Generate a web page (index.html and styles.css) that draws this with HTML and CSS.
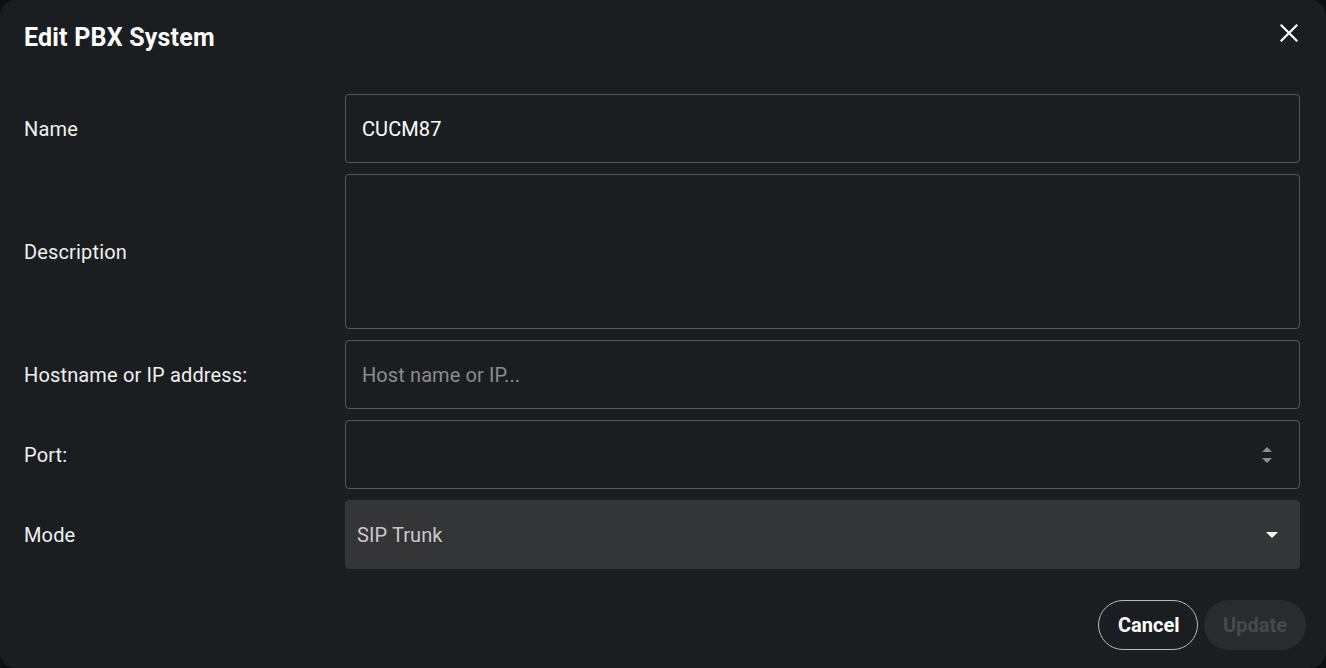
FILE: index.html
```html
<!DOCTYPE html>
<html lang="en">
<head>
<meta charset="utf-8">
<title>Edit PBX System</title>
<link rel="stylesheet" href="styles.css">
</head>
<body>
<div class="dialog">
  <div class="header">
    <h1 class="title">Edit PBX System</h1>
    <button class="close" aria-label="Close">
      <svg width="18" height="18" viewBox="0 0 18 18"><path d="M1.5 1.5 L16.5 16.5 M16.5 1.5 L1.5 16.5" stroke="#fff" stroke-width="2.2" stroke-linecap="square" fill="none"/></svg>
    </button>
  </div>
  <div class="form">
    <label class="label">Name</label>
    <div class="field"><input class="input" type="text" value="CUCM87"></div>

    <label class="label">Description</label>
    <div class="field field-tall"><textarea class="input textarea"></textarea></div>

    <label class="label">Hostname or IP address:</label>
    <div class="field"><input class="input" type="text" placeholder="Host name or IP..."></div>

    <label class="label">Port:</label>
    <div class="field">
      <input class="input" type="text">
      <svg class="spin" width="12" height="20" viewBox="0 0 12 20"><path d="M1 7 L6 2 L11 7 Z M1 13 L6 18 L11 13 Z" fill="#8c8e92"/></svg>
    </div>

    <label class="label">Mode</label>
    <div class="select">
      <span class="select-value">SIP Trunk</span>
      <svg class="caret" width="14" height="8" viewBox="0 0 14 8"><path d="M1 1 L7 7 L13 1 Z" fill="#fff"/></svg>
    </div>
  </div>
  <div class="actions">
    <button class="btn btn-cancel">Cancel</button>
    <button class="btn btn-update" disabled>Update</button>
  </div>
</div>
</body>
</html>
```

FILE: styles.css
```css
* { box-sizing: border-box; }
html, body {
  margin: 0;
  padding: 0;
  background: #0e0f10;
  font-family: Roboto, "Liberation Sans", Arial, sans-serif;
  color: #f2f2f2;
}
.dialog {
  width: 1326px;
  height: 668px;
  background: #1b1e21;
  border-radius: 16px;
  display: flex;
  flex-direction: column;
}
.header {
  height: 74px;
  display: flex;
  align-items: center;
  justify-content: space-between;
  padding: 0 28px 0 24px;
}
.title {
  margin: 0;
  font-size: 25px;
  font-weight: 700;
  color: #fff;
  letter-spacing: 0.2px;
}
.close {
  background: none;
  border: 0;
  padding: 0;
  width: 18px;
  height: 18px;
  align-self: flex-start;
  margin-top: 24px;
  cursor: pointer;
  display: flex;
}
.form {
  padding: 20px 26px 0 24px;
  display: grid;
  grid-template-columns: 321px 1fr;
  grid-template-rows: 69px 155px 69px 69px 69px;
  row-gap: 11px;
  align-items: center;
}
.label {
  font-size: 20px;
  color: #f0f0f0;
  letter-spacing: 0.15px;
}
.field {
  height: 100%;
  border: 1px solid #55585c;
  border-radius: 4px;
  display: flex;
  align-items: center;
  padding: 0 26px 0 16px;
}
.input {
  flex: 1;
  background: transparent;
  border: 0;
  outline: none;
  font-family: inherit;
  font-size: 20px;
  color: #fff;
  padding: 0;
  height: 100%;
  letter-spacing: 0.1px;
}
.input::placeholder { color: #8b8c8e; }
.textarea { resize: none; padding-top: 16px; }
.spin { display: block; }
.select {
  height: 100%;
  background: #343537;
  border-radius: 4px;
  display: flex;
  align-items: center;
  justify-content: space-between;
  padding: 0 21px 0 12px;
}
.select-value {
  font-size: 20px;
  color: #c9c9ca;
  letter-spacing: 0.1px;
}
.caret { display: block; }
.actions {
  display: flex;
  justify-content: flex-end;
  gap: 6px;
  padding: 31px 20px 0 0;
}
.btn {
  height: 50px;
  border-radius: 25px;
  font-family: inherit;
  font-size: 20px;
  font-weight: 700;
  padding: 0 19px;
}
.btn-cancel {
  background: transparent;
  border: 1px solid #b8b9bb;
  color: #fff;
  width: 100px;
}
.btn-update {
  background: #2a2b2d;
  border: 0;
  color: #48494b;
  width: 102px;
}
```
